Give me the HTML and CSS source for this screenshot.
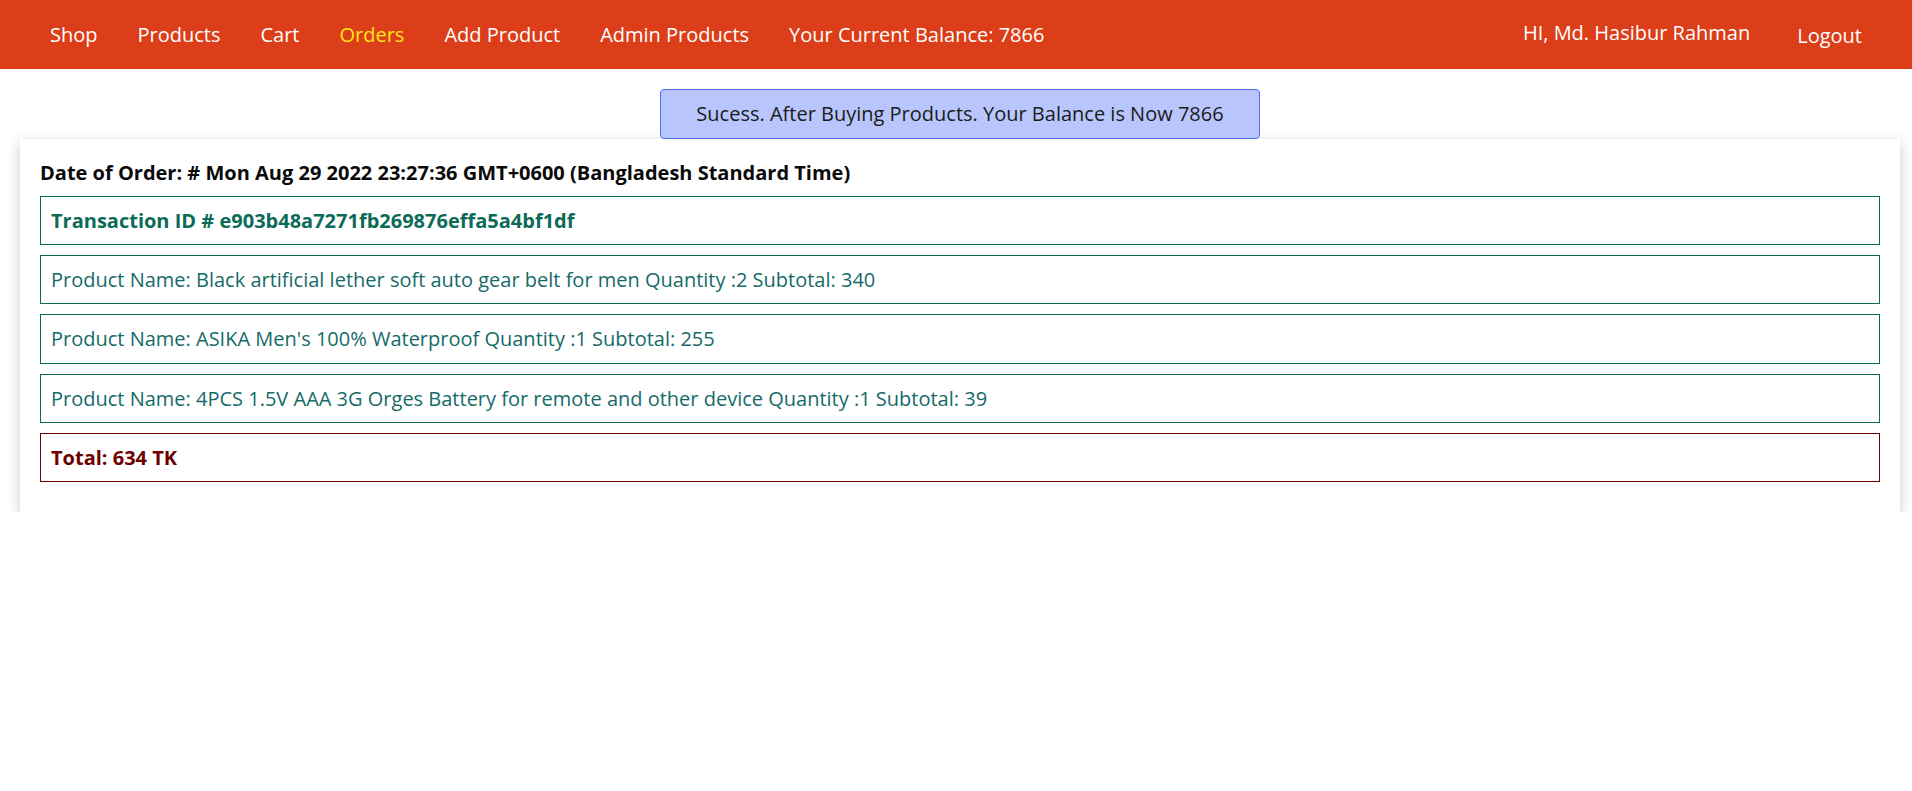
FILE: index.html
```html
<!DOCTYPE html>
<html lang="en">
<head>
<meta charset="utf-8">
<title>Orders</title>
<link rel="stylesheet" href="styles.css">
</head>
<body>
<nav class="navbar">
  <div class="nav-left">
    <a class="nav-link" href="#">Shop</a>
    <a class="nav-link" href="#">Products</a>
    <a class="nav-link" href="#">Cart</a>
    <a class="nav-link active" href="#">Orders</a>
    <a class="nav-link" href="#">Add Product</a>
    <a class="nav-link" href="#">Admin Products</a>
    <span class="nav-link">Your Current Balance: 7866</span>
  </div>
  <div class="nav-right">
    <span class="nav-user">HI, Md. Hasibur Rahman</span>
    <a class="nav-link logout" href="#">Logout</a>
  </div>
</nav>
<main class="main">
  <div class="alert-wrap">
    <div class="alert">Sucess. After Buying Products. Your Balance is Now 7866</div>
  </div>
  <section class="order-card">
    <h3 class="order-date">Date of Order: # Mon Aug 29 2022 23:27:36 GMT+0600 (Bangladesh Standard Time)</h3>
    <div class="row row-tx">Transaction ID # e903b48a7271fb269876effa5a4bf1df</div>
    <div class="row">Product Name: Black artificial lether soft auto gear belt for men Quantity :2 Subtotal: 340</div>
    <div class="row">Product Name: ASIKA Men's 100% Waterproof Quantity :1 Subtotal: 255</div>
    <div class="row">Product Name: 4PCS 1.5V AAA 3G Orges Battery for remote and other device Quantity :1 Subtotal: 39</div>
    <div class="row row-total">Total: 634 TK</div>
  </section>
</main>
</body>
</html>
```

FILE: styles.css
```css
* { box-sizing: border-box; }

body {
  margin: 0;
  font-family: "Open Sans", "Liberation Sans", sans-serif;
  background: #ffffff;
  color: #111;
}

.navbar {
  height: 69px;
  background: #db3e18;
  display: flex;
  align-items: center;
  justify-content: space-between;
  padding: 0 30px;
}

.nav-left, .nav-right {
  display: flex;
  align-items: center;
}

.nav-link {
  color: #ffffff;
  text-decoration: none;
  font-size: 20px;
  line-height: 27px;
  padding: 0 20px;
}

.nav-link.active { color: #ffe41c; }

.nav-user {
  color: #ffffff;
  font-size: 20px;
  line-height: 27px;
  margin-right: 27px;
  position: relative;
  top: -2px;
}

.logout {
  position: relative;
  top: 1px;
}

.alert-wrap {
  display: flex;
  justify-content: center;
  padding-top: 20px;
  padding-left: 8px;
}

.alert {
  width: 600px;
  background: #b9c6fd;
  border: 1px solid #4f6ef0;
  border-radius: 4px;
  padding: 10px 10px;
  text-align: center;
  font-size: 20px;
  line-height: 27.5px;
  color: #1a1a1a;
}

.order-card {
  margin: 0 12px 0 20px;
  padding: 20px 20px 20px;
  background: #fff;
  box-shadow: 0 4px 12px rgba(0, 0, 0, 0.22);
}

.order-date {
  margin: 0 0 10px;
  font-size: 20px;
  line-height: 27px;
  font-weight: 700;
  color: #0a0a0a;
}

.row {
  border: 1px solid #0c6b58;
  padding: 10px 10px;
  font-size: 20px;
  line-height: 27.36px;
  color: #156b68;
  margin-bottom: 10px;
}

.row-tx {
  font-weight: 700;
  color: #0c6b58;
}

.row-total {
  border-color: #700000;
  color: #6e0000;
  font-weight: 700;
}
```
